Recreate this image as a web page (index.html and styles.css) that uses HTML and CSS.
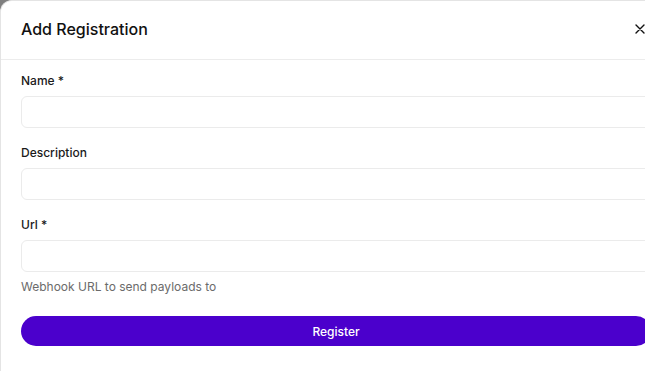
FILE: index.html
```html
<!DOCTYPE html>
<html lang="en">
<head>
<meta charset="utf-8">
<title>Add Registration</title>
<link rel="stylesheet" href="styles.css">
</head>
<body>
<div class="dialog">
  <div class="dialog-header">
    <h2 class="dialog-title">Add Registration</h2>
    <button class="close-btn" aria-label="Close">
      <svg width="16" height="16" viewBox="0 0 16 16" fill="none" stroke="#111" stroke-width="1.4" stroke-linecap="round"><path d="M4 4L12 12M12 4L4 12"/></svg>
    </button>
  </div>
  <form class="dialog-body">
    <div class="field">
      <label class="field-label">Name *</label>
      <input class="field-input" type="text">
    </div>
    <div class="field">
      <label class="field-label">Description</label>
      <input class="field-input" type="text">
    </div>
    <div class="field field-last">
      <label class="field-label">Url *</label>
      <input class="field-input" type="text">
      <p class="field-help">Webhook URL to send payloads to</p>
    </div>
    <button type="button" class="submit-btn">Register</button>
  </form>
</div>
</body>
</html>
```
FILE: styles.css
```css
* { box-sizing: border-box; }
html, body {
  margin: 0;
  padding: 0;
  overflow: hidden;
}
body {
  background: #7f7f7f;
  font-family: Inter, "Noto Sans", sans-serif;
  color: #1a1a1a;
  width: 645px;
  height: 371px;
}
.dialog {
  width: 672px;
  height: 371px;
  background: #fff;
  border: 1px solid #e4e4e4;
  border-bottom: none;
  border-radius: 12px 12px 0 0;
}
.dialog-header {
  display: flex;
  align-items: center;
  justify-content: space-between;
  padding: 16px 20px 18px 20px;
  border-bottom: 1px solid #ececec;
}
.dialog-title {
  margin: 0;
  font-size: 16px;
  line-height: 24px;
  font-weight: 500;
  color: #111;
}
.close-btn {
  display: flex;
  padding: 0;
  margin: 0 3px 0 0;
  border: none;
  background: none;
}
.dialog-body {
  padding: 11px 20px 0 20px;
  margin: 0;
}
.field {
  margin-bottom: 15px;
}
.field-last {
  margin-bottom: 0;
}
.field-label {
  display: block;
  font-size: 12px;
  line-height: 20px;
  font-weight: 500;
  color: #1a1a1a;
  margin-bottom: 5px;
}
.field-input {
  display: block;
  width: 100%;
  height: 32px;
  border: 1px solid #ebebeb;
  border-radius: 6px;
  background: #fff;
  outline: none;
  font-family: inherit;
  font-size: 12px;
}
.field-help {
  margin: 5px 0 0 0;
  font-size: 12px;
  line-height: 20px;
  color: #6b6b6b;
}
.submit-btn {
  display: block;
  width: 100%;
  height: 30px;
  margin-top: 19px;
  border: none;
  border-radius: 15px;
  background: #4b00cc;
  color: #fff;
  font-family: inherit;
  font-size: 12px;
  font-weight: 500;
}
```
